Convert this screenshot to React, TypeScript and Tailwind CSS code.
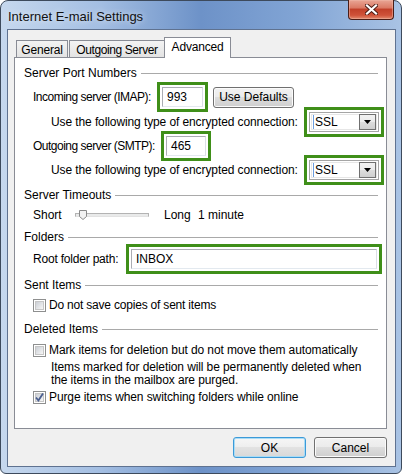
const ui = "font-['Segoe_UI','Liberation_Sans',Arial,sans-serif] text-[12px] text-black";
const green = "outline outline-[3px] outline-[#3f8f19] outline-offset-[2px]";

function GroupHeader({ title, className = "" }: { title: string; className?: string }) {
  return (
    <div className={`flex h-4 items-center pl-[9px] pr-[8px] ${className}`}>
      <span className="whitespace-nowrap">{title}</span>
      <div className="ml-[4px] h-px flex-1 bg-[#a9a9a9]" />
    </div>
  );
}

function TextBox({ value, className = "" }: { value: string; className?: string }) {
  return (
    <div
      className={`flex h-[20px] items-center border border-[#abadb3] border-b-[#e3e9ef] border-r-[#dbdfe6] bg-white pl-[4px] ${className}`}
    >
      {value}
    </div>
  );
}

function Select() {
  return (
    <div className={`flex h-[20px] w-[70px] items-center border border-[#a5a5a5] bg-white p-px ${green}`}>
      <div className="flex h-full flex-1 items-center border border-[#e6e6e6]">
        <span className="ml-px h-[14px] w-px bg-[#6c9ee0]" />
        <span className="ml-[1px]">SSL</span>
        <span className="ml-auto flex h-[16px] w-[17px] items-center justify-center border border-[#707070] bg-[linear-gradient(#f2f2f2,#ebebeb_50%,#dddddd_50%,#cfcfcf)]">
          <svg width="7" height="4" viewBox="0 0 7 4">
            <path d="M0 0H7L3.5 4Z" fill="#000" />
          </svg>
        </span>
      </div>
    </div>
  );
}

function CheckBox({ checked = false }: { checked?: boolean }) {
  return (
    <span className="flex h-[13px] w-[13px] shrink-0 items-center justify-center border border-[#8e8f8f] bg-white">
      <span className="relative flex h-[9px] w-[9px] items-center justify-center border border-[#c6c6c6] bg-[linear-gradient(135deg,#cbcfd5,#f6f6f6)]">
        {checked && (
          <svg width="11" height="11" viewBox="0 0 11 11" className="absolute -left-[2px] -top-[2px]">
            <path d="M2 5.5 L4.4 8.5 L9 1.5" fill="none" stroke="#4b5f8f" strokeWidth="1.8" />
          </svg>
        )}
      </span>
    </span>
  );
}

function WinButton({ children, primary, className = "" }: { children: string; primary?: boolean; className?: string }) {
  return (
    <div
      className={`flex h-[21px] items-center justify-center rounded-[3px] border ${
        primary
          ? "border-[#3c9ad8] shadow-[inset_0_0_0_1px_#a9dcf6] bg-[linear-gradient(#f6f6f6,#eeeeee_50%,#e2e2e2_50%,#d8d8d8)]"
          : "border-[#707070] shadow-[inset_0_0_0_1px_#fbfbfb] bg-[linear-gradient(#f2f2f2,#ebebeb_50%,#dddddd_50%,#cfcfcf)]"
      } ${className}`}
    >
      {children}
    </div>
  );
}

function Slider() {
  return (
    <div className="relative h-[4px] w-[74px] border border-[#b3b3b3] border-b-[#e2e2e2] bg-[#e9eaea]">
      <svg width="8" height="10" viewBox="0 0 8 10" className="absolute -top-[4px] left-[3px]">
        <path d="M0.5 0.5H7.5V6.5L4 9.5L0.5 6.5Z" fill="#f2f2f2" stroke="#8a8a8a" />
      </svg>
    </div>
  );
}

export default function App() {
  return (
    <div className={`${ui} flex h-[474px] w-[402px] flex-col rounded-t-[8px] rounded-b-[6px] border border-[#3d4a5c] bg-[linear-gradient(90deg,#c6d8ee_0%,#a3bee2_25%,#6d92c8_50%,#82a5d5_75%,#a9c3e4_100%)]`}>
      {/* title bar */}
      <div className="flex h-[28px] shrink-0 items-start justify-between pl-[7px] pr-[7px]">
        <span className="mt-[6px] text-[13px] text-[#111] [text-shadow:0_0_6px_#ffffffcc]">Internet E-mail Settings</span>
        <div className="-mt-px flex h-[20px] w-[46px] items-center justify-center rounded-b-[4px] border border-t-0 border-[#4a1d16] bg-[linear-gradient(#e9a695,#db7b66_40%,#c2412a_50%,#cf5239_80%,#e38a6e)] shadow-[inset_0_0_0_1px_#f0b9aa80]">
          <svg width="13" height="11" viewBox="0 0 13 11">
            <path d="M2 1.5 L11 9.5 M11 1.5 L2 9.5" stroke="#4a1b14" strokeWidth="4" strokeLinecap="square" />
            <path d="M2 1.5 L11 9.5 M11 1.5 L2 9.5" stroke="#fff" strokeWidth="2.2" strokeLinecap="square" />
          </svg>
        </div>
      </div>

      {/* client area */}
      <div className="ml-[6px] mr-[5px] flex h-[438px] flex-col border border-[#5f7290] bg-[#f0f0f0]">
        <div className="ml-[6px] mr-[8px] flex flex-col pt-[7px]">
          {/* tabs */}
          <div className="flex h-[20px] items-end pl-[2px] tracking-[-0.2px]">
            <div className="flex h-[17px] w-[52px] items-center justify-center border border-b-0 border-[#898c95] bg-[linear-gradient(#f3f3f3,#e3e3e3)] pt-px">
              General
            </div>
            <div className="ml-px flex h-[17px] w-[96px] items-center justify-center whitespace-nowrap border border-b-0 border-[#898c95] bg-[linear-gradient(#f3f3f3,#e3e3e3)] pt-px tracking-[-0.4px]">
              Outgoing Server
            </div>
            <div className="relative z-10 -mb-px -ml-px flex h-[21px] w-[67px] items-center justify-center border border-b-0 border-[#898c95] bg-white pb-[2px]">
              Advanced
            </div>
          </div>

          {/* panel */}
          <div className="flex h-[372px] flex-col border border-[#898c95] bg-white">
            <GroupHeader title="Server Port Numbers" className="mt-[7px]" />

            <div className="mt-[4px] flex h-[24px] items-center pl-[18px]">
              <span className="w-[129px] whitespace-nowrap tracking-[-0.5px]">Incoming server (IMAP):</span>
              <TextBox value="993" className={`w-[41px] ${green}`} />
              <WinButton className="ml-[10px] w-[81px]">Use Defaults</WinButton>
            </div>

            <div className="mt-px flex h-[24px] items-center pl-[36px]">
              <span className="w-[258px] whitespace-nowrap tracking-[-0.1px]">Use the following type of encrypted connection:</span>
              <Select />
            </div>

            <div className="flex h-[24px] items-center pl-[18px]">
              <span className="w-[133px] whitespace-nowrap tracking-[-0.5px]">Outgoing server (SMTP):</span>
              <TextBox value="465" className={`w-[40px] ${green}`} />
            </div>

            <div className="flex h-[24px] items-center pl-[36px]">
              <span className="w-[258px] whitespace-nowrap tracking-[-0.1px]">Use the following type of encrypted connection:</span>
              <Select />
            </div>

            <GroupHeader title="Server Timeouts" className="mt-[5px]" />
            <div className="flex h-[24px] items-center pl-[18px]">
              <span className="w-[42px]">Short</span>
              <Slider />
              <span className="ml-[15px] w-[34px]">Long</span>
              <span>1 minute</span>
            </div>

            <GroupHeader title="Folders" className="mt-[2px]" />
            <div className="mt-[2px] flex h-[24px] items-center pl-[18px]">
              <span className="w-[98px] whitespace-nowrap tracking-[-0.2px]">Root folder path:</span>
              <TextBox value="INBOX" className={`w-[246px] ${green}`} />
            </div>

            <GroupHeader title="Sent Items" className="mt-[6px]" />
            <div className="mt-[2px] flex h-[20px] items-center pl-[18px]">
              <CheckBox />
              <span className="ml-[3px] tracking-[-0.2px]">Do not save copies of sent items</span>
            </div>

            <GroupHeader title="Deleted Items" className="mt-[6px]" />
            <div className="mt-[3px] flex h-[20px] items-center pl-[18px]">
              <CheckBox />
              <span className="ml-[3px] whitespace-nowrap tracking-[-0.1px]">Mark items for deletion but do not move them automatically</span>
            </div>
            <p className="mt-px whitespace-nowrap pl-[36px] leading-[13px] tracking-[-0.1px]">
              Items marked for deletion will be permanently deleted when
              <br />
              the items in the mailbox are purged.
            </p>
            <div className="flex h-[20px] items-center pl-[18px]">
              <CheckBox checked />
              <span className="ml-[3px] tracking-[-0.1px]">Purge items when switching folders while online</span>
            </div>
          </div>

          {/* buttons */}
          <div className="mt-[8px] flex justify-end gap-[8px]">
            <WinButton primary className="w-[73px]">OK</WinButton>
            <WinButton className="w-[73px]">Cancel</WinButton>
          </div>
        </div>
      </div>
    </div>
  );
}
